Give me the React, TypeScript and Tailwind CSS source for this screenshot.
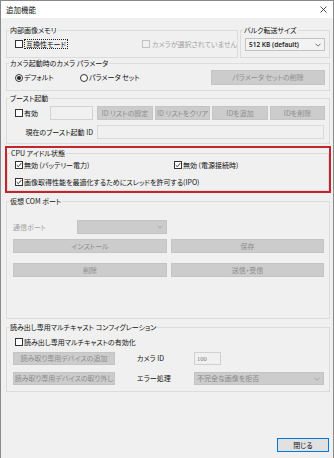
import type { FunctionComponent, ReactNode } from "react";

const Group: FunctionComponent<{ label: string; className?: string; children?: ReactNode }> = (props) => {
    return (
        <fieldset className={`min-w-0 border border-[#dcdcdc] ${props.className ?? ""}`}>
            <legend className="ml-[2px] px-[1px] leading-[10px] text-[#111]">{props.label}</legend>
            {props.children}
        </fieldset>
    );
};

const Check: FunctionComponent<{ checked?: boolean; disabled?: boolean }> = (props) => {
    return (
        <span
            className={`flex w-[8px] h-[8px] shrink-0 items-center justify-center border ${
                props.disabled ? "border-[#c2c2c2] bg-[#f0f0f0]" : "border-[#333] bg-white"
            }`}
        >
            {props.checked && (
                <svg width="6" height="6" viewBox="0 0 6 6">
                    <path d="M0.7 3.1 L2.3 4.7 L5.3 1.1" stroke="#222" strokeWidth="0.9" fill="none" />
                </svg>
            )}
        </span>
    );
};

const Radio: FunctionComponent<{ checked?: boolean }> = (props) => {
    return (
        <span className="flex w-[8px] h-[8px] shrink-0 items-center justify-center rounded-full border border-[#333] bg-white">
            {props.checked && <span className="w-[4px] h-[4px] rounded-full bg-[#222]" />}
        </span>
    );
};

const Btn: FunctionComponent<{ className?: string; children?: ReactNode }> = (props) => {
    return (
        <div className={`flex shrink-0 items-center justify-center whitespace-nowrap overflow-hidden border border-[#c4c4c4] bg-[#cccccc] text-[#8c8c8c] ${props.className ?? ""}`}>
            {props.children}
        </div>
    );
};

const Chevron = ({ color }: { color: string }) => (
    <svg width="6" height="4" viewBox="0 0 6 4">
        <path d="M0.5 0.7 L3 3.2 L5.5 0.7" stroke={color} strokeWidth="0.8" fill="none" />
    </svg>
);

export default function App() {
    return (
        <div className="w-[334px] h-[458px] overflow-hidden flex flex-col bg-[#f0f0f0] border-x border-t border-[#8a8a8a] text-[7px] text-[#111] font-['Noto_Sans_CJK_JP',sans-serif] [font-feature-settings:'palt']">
            {/* title bar */}
            <div className="h-[17px] shrink-0 flex items-center justify-between bg-white pl-[5px] pr-[6px]">
                <span className="text-[7.5px]">追加機能</span>
                <svg width="7" height="7" viewBox="0 0 7 7">
                    <path d="M0.5 0.5 L6.5 6.5 M6.5 0.5 L0.5 6.5" stroke="#222" strokeWidth="0.8" />
                </svg>
            </div>

            <div className="flex-1 flex flex-col pl-[5px] pr-[3px]">
                {/* row: memory + bulk */}
                <div className="mt-[7px] flex gap-[2px]">
                    <Group label="内部画像メモリ" className="w-[232px] h-[33px]">
                        <div className="pt-[4px] pl-[8px] flex items-center h-[14px]">
                            <div className="w-[127px] flex items-center gap-[1px]">
                                <Check />
                                <span className="border border-dotted border-[#222] px-[1px] leading-[8px]">互換性モード</span>
                            </div>
                            <div className="flex-1 min-w-0 flex items-center gap-[2px] overflow-hidden whitespace-nowrap">
                                <Check disabled />
                                <span className="text-[#a3a3a3]">カメラが選択されていません</span>
                            </div>
                        </div>
                    </Group>
                    <Group label="バルク転送サイズ" className="w-[90px] h-[33px]">
                        <div className="pt-[3px] pl-[4px]">
                            <div className="w-[80px] h-[13px] flex items-center justify-between border border-[#c3c3c3] bg-[#f3f3f3] pl-[3px] pr-[3px]">
                                <span className="font-['Noto_Sans',sans-serif] text-[6.5px] font-semibold text-[#222]">512 KB (default)</span>
                                <Chevron color="#555" />
                            </div>
                        </div>
                    </Group>
                </div>

                {/* camera params */}
                <Group label="カメラ起動時のカメラ パラメータ" className="h-[33px]">
                    <div className="pt-[2px] pl-[8px] pr-[4px] flex items-center h-[17px]">
                        <div className="w-[65px] flex items-center gap-[1px]">
                            <Radio checked />
                            <span>デフォルト</span>
                        </div>
                        <div className="flex items-center gap-[1px]">
                            <Radio />
                            <span>パラメータ セット</span>
                        </div>
                        <Btn className="ml-auto w-[114px] h-[15px]">パラメータ セットの削除</Btn>
                    </div>
                </Group>

                {/* boost */}
                <Group label="ブースト起動" className="mt-[2px] h-[51px]">
                    <div className="pt-[3px] pl-[8px] flex items-center h-[17px]">
                        <div className="w-[35px] flex items-center gap-[1px]">
                            <Check />
                            <span>有効</span>
                        </div>
                        <div className="w-[43px] h-[14px] border border-[#d3d3d3] bg-[#f0f0f0]" />
                        <Btn className="ml-[4px] w-[56px] h-[14px]">ID リストの設定</Btn>
                        <Btn className="ml-[2px] w-[55px] h-[14px]">ID リストをクリア</Btn>
                        <Btn className="ml-[2px] w-[56px] h-[14px]">IDを追加</Btn>
                        <Btn className="ml-[2px] w-[55px] h-[14px]">IDを削除</Btn>
                    </div>
                    <div className="mt-[5px] pl-[8px] flex items-center h-[14px]">
                        <div className="w-[82px] flex justify-end pr-[4px]">現在のブースト起動 ID</div>
                        <div className="w-[227px] h-[14px] border border-[#d9d9d9] bg-[#f0f0f0]" />
                    </div>
                </Group>

                {/* highlighted CPU idle */}
                <div className="mt-[2px] -mx-[1px] h-[47px] border-2 border-[#c2252b]">
                    <Group label="CPU アイドル状態" className="h-[43px]">
                        <div className="pt-[2px] pl-[7px] flex items-center h-[12px]">
                            <div className="w-[159px] flex items-center gap-[1px]">
                                <Check checked />
                                <span>無効 (バッテリー電力)</span>
                            </div>
                            <div className="flex items-center gap-[1px]">
                                <Check checked />
                                <span>無効 (電源接続時)</span>
                            </div>
                        </div>
                        <div className="mt-[7px] pl-[7px] flex items-center gap-[1px] h-[10px]">
                            <Check checked />
                            <span>画像取得性能を最適化するためにスレッドを許可する(IPO)</span>
                        </div>
                    </Group>
                </div>

                {/* virtual COM */}
                <Group label="仮想 COM ポート" className="mt-[3px] h-[123px]">
                    <div className="pt-[14px] pl-[6px] flex items-center h-[28px]">
                        <div className="w-[64px] text-[#a3a3a3]">通信ポート</div>
                        <div className="w-[90px] h-[14px] flex items-center justify-end border border-[#c3c3c3] bg-[#cccccc] pr-[3px]">
                            <Chevron color="#9a9a9a" />
                        </div>
                    </div>
                    <div className="mt-[5px] pl-[6px] flex items-center">
                        <Btn className="w-[154px] h-[14px]">インストール</Btn>
                        <Btn className="ml-[4px] w-[153px] h-[14px]">保存</Btn>
                    </div>
                    <div className="mt-[10px] pl-[6px] flex items-center">
                        <Btn className="w-[154px] h-[14px]">削除</Btn>
                        <Btn className="ml-[4px] w-[153px] h-[14px]">送信・受信</Btn>
                    </div>
                </Group>

                {/* multicast */}
                <Group label="読み出し専用マルチキャスト コンフィグレーション" className="mt-[3px] h-[70px]">
                    <div className="pt-[5px] pl-[8px] flex items-center gap-[1px] h-[15px]">
                        <Check />
                        <span>読み出し専用マルチキャストの有効化</span>
                    </div>
                    <div className="mt-[5px] pl-[6px] flex items-center h-[13px]">
                        <Btn className="w-[102px] h-[13px]">読み取り専用デバイスの追加</Btn>
                        <div className="ml-[22px] w-[57px]">カメラ ID</div>
                        <div className="w-[27px] h-[13px] flex items-center border border-[#d0d0d0] bg-[#f0f0f0] pl-[2px] font-['Liberation_Serif',serif] text-[6.5px] text-[#7a7a7a]">
                            100
                        </div>
                    </div>
                    <div className="mt-[7px] pl-[6px] flex items-center h-[13px]">
                        <Btn className="w-[102px] h-[13px]">読み取り専用デバイスの取り外し</Btn>
                        <div className="ml-[22px] w-[57px]">エラー処理</div>
                        <div className="w-[130px] h-[13px] flex items-center justify-between border border-[#c3c3c3] bg-[#cccccc] pl-[2px] pr-[3px] text-[#8a8a8a]">
                            <span>不完全な画像を拒否</span>
                            <Chevron color="#9a9a9a" />
                        </div>
                    </div>
                </Group>

                {/* close */}
                <div className="mt-[46px] mr-[1px] self-end w-[52px] h-[14px] flex items-center justify-center border border-[#0078d7] bg-[#e1e1e1]">
                    閉じる
                </div>
            </div>
        </div>
    );
}
